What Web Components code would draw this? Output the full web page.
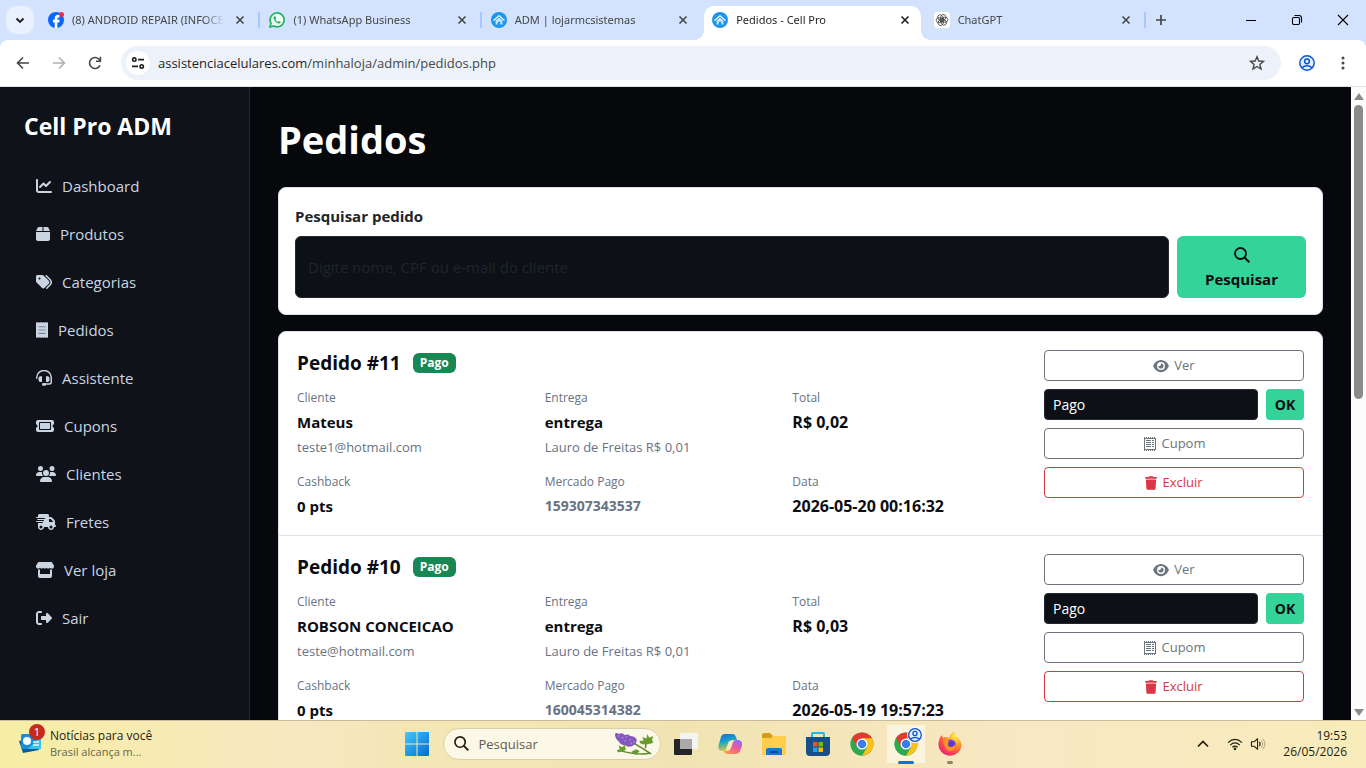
<!DOCTYPE html>
<html lang="pt-BR">
<head>
<meta charset="utf-8">
<title>Pedidos - Cell Pro</title>
<style>
  html, body {
    height: 100%;
    margin: 0;
  }

  body {
    display: flex;
    flex-direction: column;
    overflow: hidden;
    font-family: "Open Sans", "Noto Sans", sans-serif;
    font-size: 15px;
    line-height: 24px;
    background: #07080c;
  }
</style>
</head>
<body>

<tab-strip>
  <browser-tab icon="facebook">(8) ANDROID REPAIR (INFOCELL)</browser-tab>
  <browser-tab icon="whatsapp">(1) WhatsApp Business</browser-tab>
  <browser-tab icon="home" before-active>ADM | lojarmcsistemas</browser-tab>
  <browser-tab icon="home" active>Pedidos - Cell Pro</browser-tab>
  <browser-tab icon="chatgpt">ChatGPT</browser-tab>
</tab-strip>
<browser-toolbar host="assistenciacelulares.com" path="/minhaloja/admin/pedidos.php"></browser-toolbar>

<page-view>
  <admin-sidebar slot="sidebar" heading="Cell Pro ADM">
    <sidebar-link icon="chart">Dashboard</sidebar-link>
    <sidebar-link icon="box">Produtos</sidebar-link>
    <sidebar-link icon="tags">Categorias</sidebar-link>
    <sidebar-link icon="receipt">Pedidos</sidebar-link>
    <sidebar-link icon="headset">Assistente</sidebar-link>
    <sidebar-link icon="ticket">Cupons</sidebar-link>
    <sidebar-link icon="users">Clientes</sidebar-link>
    <sidebar-link icon="truck">Fretes</sidebar-link>
    <sidebar-link icon="store">Ver loja</sidebar-link>
    <sidebar-link icon="logout">Sair</sidebar-link>
  </admin-sidebar>

  <order-search></order-search>
  <order-list>
    <order-row number="11" status="Pago">
      <order-field label="Cliente" note="teste1@hotmail.com">Mateus</order-field>
      <order-field label="Entrega" note="Lauro de Freitas R$ 0,01">entrega</order-field>
      <order-field label="Total" numeric>R$ 0,02</order-field>
      <order-field label="Cashback">0 pts</order-field>
      <order-field label="Mercado Pago" muted>159307343537</order-field>
      <order-field label="Data" numeric>2026-05-20 00:16:32</order-field>
    </order-row>
    <order-row number="10" status="Pago">
      <order-field label="Cliente" note="teste@hotmail.com">ROBSON CONCEICAO</order-field>
      <order-field label="Entrega" note="Lauro de Freitas R$ 0,01">entrega</order-field>
      <order-field label="Total" numeric>R$ 0,03</order-field>
      <order-field label="Cashback">0 pts</order-field>
      <order-field label="Mercado Pago" muted>160045314382</order-field>
      <order-field label="Data" numeric>2026-05-19 19:57:23</order-field>
    </order-row>
  </order-list>
</page-view>

<task-bar></task-bar>

<script>
// [viewBox width, viewBox height, markup]
const chromeLogo = `
  <circle cx="24" cy="24" r="23" fill="#34a853"/>
  <path d="M24 24 4.100 12.500A23 23 0 0 1 43.900 12.500Z" fill="#e33b2e"/>
  <path d="M4.100 12.500 14.500 30 24 12.500Z" fill="#e33b2e"/>
  <path d="M43.900 12.500A23 23 0 0 1 24 47L34 29.500 24 12.500Z" fill="#fbc116"/>
  <path d="M4.100 12.500A23 23 0 0 0 24 47L34 29.500 24 34 14.500 29.500Z" fill="#2da94f"/>
  <circle cx="24" cy="24" r="11" fill="#fff"/>
  <circle cx="24" cy="24" r="8.500" fill="#3b7ded"/>`;

const ICONS = {
  chart: [512, 512, `<path d="M64 64c0-17.700-14.300-32-32-32S0 46.300 0 64V400c0 44.200 35.800 80 80 80H480c17.700 0 32-14.300 32-32s-14.300-32-32-32H80c-8.800 0-16-7.200-16-16V64zm406.600 86.600c12.500-12.500 12.500-32.800 0-45.300s-32.800-12.500-45.300 0L320 210.700l-57.400-57.400c-12.500-12.500-32.800-12.500-45.300 0l-112 112c-12.500 12.500-12.500 32.800 0 45.300s32.800 12.500 45.300 0L240 221.300l57.400 57.400c12.500 12.500 32.800 12.500 45.300 0l128-128z"/>`],
  box: [448, 512, `<path d="M50.700 58.500L0 160H208V32H93.700C75.500 32 58.900 42.300 50.700 58.500zM240 160H448L397.300 58.500C389.100 42.300 372.500 32 354.300 32H240V160zm208 32H0V416c0 35.300 28.700 64 64 64H384c35.300 0 64-28.700 64-64V192z"/>`],
  tags: [512, 512, `<path d="M345 39.100L472.800 168.400c52.400 53 52.400 138.200 0 191.200L360.800 472.900c-9.300 9.400-24.500 9.500-33.900 .2s-9.500-24.500-.2-33.900L438.600 325.900c33.900-34.300 33.900-89.400 0-123.700L310.900 72.900c-9.300-9.400-9.200-24.600 .2-33.900s24.600-9.200 33.900 .2zM0 229.500V80C0 53.500 21.500 32 48 32H197.500c17 0 33.300 6.700 45.300 18.700l168 168c25 25 25 65.500 0 90.500L277.300 442.700c-25 25-65.500 25-90.500 0l-168-168C6.700 262.700 0 246.500 0 229.500zM144 144a32 32 0 1 0 -64 0 32 32 0 1 0 64 0z"/>`],
  receipt: [384, 512, `<path d="M0 0l38 26L76 0l40 26L154 0l38 26L230 0l38 26L308 0l38 26L384 0V512l-38-26-38 26-40-26-38 26-38-26-38 26-38-26-40 26-38-26L0 512Z"/><path d="M90 150h204M90 256h204M90 362h204" stroke="#7c889c" stroke-width="36" stroke-linecap="round"/>`],
  headset: [512, 512, `<path d="M24 280v-44a232 220 0 0 1 464 0v150a60 60 0 0 1-60 60H300" fill="none" stroke="currentColor" stroke-width="46"/><path d="M144 200h48v180h-48a64 64 0 0 1-64-64v-52a64 64 0 0 1 64-64zM320 200h48a64 64 0 0 1 64 64v52a64 64 0 0 1-64 64h-48z"/><rect x="192" y="416" width="130" height="88" rx="44"/>`],
  ticket: [576, 512, `<path d="M64 64C28.700 64 0 92.700 0 128v64c0 8.800 7.400 15.700 15.700 18.600C34.500 217.100 48 235 48 256s-13.500 38.900-32.300 45.400C7.400 304.300 0 311.200 0 320v64c0 35.300 28.700 64 64 64H512c35.300 0 64-28.700 64-64V320c0-8.800-7.400-15.700-15.700-18.600C541.500 294.900 528 277 528 256s13.500-38.900 32.300-45.400c8.300-2.900 15.700-9.800 15.700-18.600V128c0-35.300-28.700-64-64-64H64zm64 112l0 160c0 8.800 7.200 16 16 16H432c8.800 0 16-7.200 16-16V176c0-8.800-7.200-16-16-16H144c-8.800 0-16 7.200-16 16zM96 160c0-17.700 14.300-32 32-32H448c17.700 0 32 14.300 32 32V352c0 17.700-14.300 32-32 32H128c-17.700 0-32-14.300-32-32V160z"/>`],
  users: [640, 512, `<path d="M144 0a80 80 0 1 1 0 160A80 80 0 1 1 144 0zM512 0a80 80 0 1 1 0 160A80 80 0 1 1 512 0zM0 298.700C0 239.800 47.800 192 106.700 192h42.700c15.900 0 31 3.500 44.600 9.700c-1.300 7.200-1.900 14.700-1.900 22.300c0 38.200 16.800 72.500 43.300 96H21.300C9.600 320 0 310.400 0 298.700zM405.300 320c26.600-23.500 42.600-57.800 42.600-96c0-7.600-.7-15-1.900-22.300c13.600-6.300 28.700-9.700 44.600-9.700h42.700C592.200 192 640 239.800 640 298.700c0 11.800-9.600 21.300-21.300 21.300H405.300zM224 224a96 96 0 1 1 192 0 96 96 0 1 1 -192 0zM128 485.300C128 411.700 187.700 352 261.300 352H378.700C452.300 352 512 411.700 512 485.300c0 14.700-11.900 26.700-26.700 26.700H154.700c-14.700 0-26.700-11.900-26.700-26.700z"/>`],
  truck: [640, 512, `<path d="M112 0C85.500 0 64 21.500 64 48V96H16c-8.800 0-16 7.200-16 16s7.200 16 16 16H272c8.800 0 16 7.200 16 16s-7.200 16-16 16H48c-8.800 0-16 7.200-16 16s7.200 16 16 16H240c8.800 0 16 7.200 16 16s-7.200 16-16 16H16c-8.800 0-16 7.200-16 16s7.200 16 16 16H208c8.800 0 16 7.200 16 16s-7.200 16-16 16H64V416c0 53 43 96 96 96s96-43 96-96H384c0 53 43 96 96 96s96-43 96-96h32c17.700 0 32-14.300 32-32s-14.300-32-32-32V237.300c0-17-6.700-33.300-18.700-45.300L512 114.700c-12-12-28.300-18.700-45.300-18.700H416V48c0-26.500-21.500-48-48-48H112zM544 237.300V256H416V160h50.700L544 237.300zM160 368a48 48 0 1 1 0 96 48 48 0 1 1 0-96zm272 48a48 48 0 1 1 96 0 48 48 0 1 1 -96 0z"/>`],
  store: [576, 512, `<path d="M90 0H486q18 0 28 16l54 86c24 40 0 106-56 106q-38 0-62-28-25 28-54 28-32 0-54-28-24 28-54 28-32 0-54-28-24 28-54 28-30 0-54-28-24 28-62 28C8 208-16 142 8 102L62 16Q72 0 90 0Z"/><path d="M64 236q36 10 64-2V384H448V234q28 12 64 2V448a64 64 0 0 1-64 64H128a64 64 0 0 1-64-64Z"/>`],
  logout: [512, 512, `<path d="M377.900 105.900L500.700 228.700c7.200 7.200 11.300 17.100 11.300 27.300s-4.100 20.100-11.300 27.300L377.900 406.100c-6.400 6.400-15 9.900-24 9.900c-18.700 0-33.900-15.200-33.900-33.900l0-62.100-128 0c-17.700 0-32-14.300-32-32l0-64c0-17.700 14.300-32 32-32l128 0 0-62.100c0-18.700 15.200-33.900 33.900-33.900c9 0 17.600 3.600 24 9.900zM160 96L96 96c-17.700 0-32 14.300-32 32l0 256c0 17.700 14.300 32 32 32l64 0c17.700 0 32 14.300 32 32s-14.300 32-32 32l-64 0c-53 0-96-43-96-96L0 128C0 75 43 32 96 32l64 0c17.700 0 32 14.300 32 32s-14.300 32-32 32z"/>`],
  eye: [576, 512, `<path d="M288 32c-80.800 0-145.500 36.800-192.600 80.600C48.600 156 17.300 208 2.500 243.700c-3.300 7.900-3.300 16.700 0 24.600C17.300 304 48.600 356 95.400 399.400C142.500 443.200 207.200 480 288 480s145.500-36.800 192.600-80.600c46.800-43.500 78.100-95.400 93-131.100c3.300-7.900 3.300-16.700 0-24.600c-14.900-35.700-46.200-87.700-93-131.100C433.500 68.800 368.800 32 288 32zM144 256a144 144 0 1 1 288 0 144 144 0 1 1 -288 0zm144-64c0 35.300-28.700 64-64 64c-7.100 0-13.900-1.200-20.300-3.300c-5.500-1.800-11.900 1.600-11.700 7.400c.3 6.900 1.300 13.800 3.200 20.700c13.700 51.200 66.400 81.600 117.600 67.900s81.600-66.400 67.900-117.600c-11.100-41.500-47.800-69.400-88.600-71.100c-5.800-.2-9.200 6.100-7.400 11.700c2.100 6.400 3.300 13.200 3.300 20.300z"/>`],
  coupon: [14, 14, `<rect x="1.500" y="1.500" width="11" height="11" fill="none" stroke="currentColor"/><path d="M1 .5h12M1 13.500h12" stroke="currentColor" stroke-dasharray="1 1"/><path d="M3 3.500h5M3 5.500h5M3 7.500h5M3 9.500h5M9 3.500h2M9 5.500h2M9 7.500h2M9 9.500h2" stroke="currentColor"/>`],
  trash: [448, 512, `<path d="M135.200 17.700L128 32H32C14.300 32 0 46.300 0 64S14.300 96 32 96H416c17.700 0 32-14.300 32-32s-14.300-32-32-32H320l-7.200-14.300C307.400 6.800 296.300 0 284.200 0H163.800c-12.100 0-23.200 6.800-28.600 17.700zM416 128H32L53.200 467c1.600 25.300 22.600 45 47.900 45H346.900c25.300 0 46.300-19.700 47.900-45L416 128z"/>`],
  search: [16, 16, `<circle cx="6.500" cy="6.500" r="5.500" fill="none" stroke="currentColor" stroke-width="1.800"/><path d="M10.500 10.500 15.300 15.300" stroke="currentColor" stroke-width="2"/>`],

  facebook: [16, 16, `<circle cx="8" cy="8" r="8" fill="#0866ff"/><path d="M6.700 16v-5.600H4.900V7.700h1.800V6.600c0-2.600 1.300-3.800 3.500-3.800.6 0 1 .1 1.400.2v2.400h-.9c-1 0-1.300.5-1.300 1.400v.9h2.200l-.4 2.700H9.400V16Z" fill="#fff"/><circle cx="13.500" cy="2.500" r="2.500" fill="#f5284b"/>`],
  whatsapp: [16, 16, `<path d="M1 15l1-3.700A7 7 0 1 1 4.700 14Z" fill="#f0fff5" stroke="#25b064" stroke-width="1.700"/><path d="M5.600 4.300c-.8.300-1.200 1.100-1 2 .5 2.500 2.800 4.900 5.200 5.300 1 .1 1.900-.5 2-1.500l-1.900-1-1 .9c-1.100-.5-2-1.400-2.400-2.400l.7-.8-.7-2.200Z" fill="#25b064"/>`],
  home: [16, 16, `<circle cx="8" cy="8" r="8" fill="#1b95ee"/><path d="M2.900 8.300 8 3.600l5.100 4.700" fill="none" stroke="#fff" stroke-width="1.200" stroke-linecap="round" stroke-linejoin="round"/><path d="M4.600 8.600 8 5.600l3.400 3v3.900H9.300V9.800H6.700v2.700H4.600Z" fill="#c5e5ff"/>`],
  chatgpt: [16, 16, `<rect width="16" height="16" rx="3" fill="#fff"/><g fill="none" stroke="#444" stroke-width=".8"><ellipse cx="8" cy="5.600" rx="2.600" ry="3.500" transform="rotate(25 8 8)"/><ellipse cx="8" cy="5.600" rx="2.600" ry="3.500" transform="rotate(85 8 8)"/><ellipse cx="8" cy="5.600" rx="2.600" ry="3.500" transform="rotate(145 8 8)"/><ellipse cx="8" cy="5.600" rx="2.600" ry="3.500" transform="rotate(205 8 8)"/><ellipse cx="8" cy="5.600" rx="2.600" ry="3.500" transform="rotate(265 8 8)"/><ellipse cx="8" cy="5.600" rx="2.600" ry="3.500" transform="rotate(325 8 8)"/></g>`],

  close: [16, 16, `<path d="M4.500 4.500l7 7M11.500 4.500l-7 7" stroke="currentColor" stroke-width="1.600"/>`],
  plus: [16, 16, `<path d="M8 3v10M3 8h10" stroke="currentColor" stroke-width="1.700"/>`],
  down: [16, 16, `<path d="M4.500 6.500 8 10l3.500-3.500" fill="none" stroke="currentColor" stroke-width="1.900"/>`],
  up: [16, 16, `<path d="M3 10.500 8 5.500l5 5" fill="none" stroke="currentColor" stroke-width="1.700"/>`],
  minimize: [16, 16, `<path d="M3 8.500h10" stroke="currentColor"/>`],
  restore: [16, 16, `<rect x="3.500" y="5.500" width="7" height="7" rx="1.200" fill="none" stroke="currentColor" stroke-width="1.100"/><path d="M5.500 3.500H10a2.500 2.500 0 0 1 2.500 2.500v4.500" fill="none" stroke="currentColor" stroke-width="1.100"/>`],
  exit: [16, 16, `<path d="M3 3l10 10M13 3 3 13" stroke="currentColor" stroke-width="1.100"/>`],
  back: [16, 16, `<path d="M14 8H3M8 2.500 2.500 8 8 13.500" fill="none" stroke="currentColor" stroke-width="1.600"/>`],
  forward: [16, 16, `<path d="M2 8h11M8 2.500 13.500 8 8 13.500" fill="none" stroke="currentColor" stroke-width="1.600"/>`],
  reload: [16, 16, `<path d="M13 10.300A5.500 5.500 0 1 1 12 4.200L13.500 5.700" fill="none" stroke="currentColor" stroke-width="1.600"/><path d="M13.400 1.800v4.400H9" fill="none" stroke="currentColor" stroke-width="1.600"/>`],
  tune: [16, 16, `<g fill="none" stroke="currentColor" stroke-width="1.600"><circle cx="4.300" cy="4.600" r="1.700"/><path d="M8 4.600h6M2 11.400h6"/><circle cx="11.700" cy="11.400" r="1.700"/></g>`],
  star: [16, 16, `<path d="M8 1.800 9.800 6l4.700.4-3.600 3 1.100 4.600L8 11.500 4 14l1.100-4.600-3.600-3L6.200 6Z" fill="none" stroke="currentColor" stroke-width="1.400"/>`],
  person: [16, 16, `<circle cx="8" cy="8" r="7.200" fill="#e4efff" stroke="#0b57d0" stroke-width="1.500"/><circle cx="8" cy="6.300" r="2.400" fill="none" stroke="#0b57d0" stroke-width="1.500"/><path d="M3 12.700c2.800-2.500 7.200-2.500 10 0" fill="none" stroke="#0b57d0" stroke-width="1.500"/>`],
  dots: [16, 16, `<circle cx="8" cy="3" r="1.500"/><circle cx="8" cy="8" r="1.500"/><circle cx="8" cy="13" r="1.500"/>`],

  news: [24, 24, `<path d="M1 11l17-4 3 13-16 3Z" fill="#0a5a9c"/><rect x="3" y="4" width="20" height="15" rx="1.500" fill="#1690dc"/><path d="M10 19 23 6v11.500a1.500 1.500 0 0 1-1.500 1.500Z" fill="#35c5e8"/><circle cx="9" cy="11" r="4" fill="#fff"/><path d="M15 12h6M15 15h6" stroke="#d8f6ff" stroke-width="1.500"/>`],
  windows: [24, 24, `<linearGradient id="w" x2="1" y2="1"><stop stop-color="#43c9ff"/><stop offset="1" stop-color="#0069cf"/></linearGradient><path d="M0 1q0-1 1-1h10.500v11.500H0ZM12.500 0H23q1 0 1 1v10.500H12.500ZM0 12.500h11.500V24H1q-1 0-1-1ZM12.500 12.500H24V23q0 1-1 1H12.500Z" fill="url(#w)"/>`],
  taskview: [24, 24, `<rect y="7" width="18" height="16" rx="1" fill="#252525"/><rect x="6" y="1" width="18" height="16" rx="1" fill="#f4f4f4"/><path d="M6 7h12v10H6Z" fill="#aaa"/>`],
  copilot: [24, 24, `<linearGradient id="a" x2=".3" y2="1"><stop stop-color="#1466df"/><stop offset=".5" stop-color="#17a6c6"/><stop offset="1" stop-color="#e3c33d"/></linearGradient><linearGradient id="b" x1=".8" x2=".2" y2="1"><stop stop-color="#9368ff"/><stop offset=".5" stop-color="#f05a98"/><stop offset="1" stop-color="#ff9547"/></linearGradient><path d="M7 2h8q2 0 3 3l1 3h-5q-2 0-3 3l-2 6q-1 2-3 2H4q-5-1-3-7l2-7q1-3 4-3Z" fill="url(#a)"/><path d="M17 22H9q-2 0-3-3h4q2 0 3-3l2-6q1-2 3-2h3q4 1 3 6l-2 5q-1 3-5 3Z" fill="url(#b)"/><path d="M11 9h4l-3 8H8Z" fill="#f7e9bf"/>`],
  folder: [24, 24, `<path d="M0 3q0-2 2-2h6l3 3h11q2 0 2 2v6H0Z" fill="#d99a15"/><path d="M0 6h9l2-2h11q2 0 2 2v17H0Z" fill="#ffce4a"/><path d="M4 23v-5q0-2 2-2h12q2 0 2 2v5Z" fill="#1479ce"/><path d="M8 20h8" stroke="#084d91" stroke-width="2"/>`],
  shop: [24, 24, `<path d="M6 6V2q0-1 1-1h10q1 0 1 1v4" fill="none" stroke="#26b4ec" stroke-width="2"/><path d="M0 5h24v15q0 4-4 4H4q-4 0-4-4Z" fill="#174f88"/><path d="M7 10h4.500v4.500H7Z" fill="#f05025"/><path d="M12.500 10H17v4.500h-4.500Z" fill="#7fba00"/><path d="M7 15.500h4.500V20H7Z" fill="#15a6ef"/><path d="M12.500 15.500H17V20h-4.500Z" fill="#ffb900"/>`],
  chrome: [48, 48, chromeLogo],
  firefox: [24, 24, `<radialGradient id="f" cx=".75" cy=".15" r="1"><stop stop-color="#fff24a"/><stop offset=".4" stop-color="#ff9a26"/><stop offset=".75" stop-color="#ff3d50"/><stop offset="1" stop-color="#d9188c"/></radialGradient><path d="M15 0q3 2 4 5 4 3 4.500 8A11.500 11.500 0 1 1 1 9q0-3 3-6l1 3q3-2 6 0 1-4 4-6Z" fill="url(#f)"/><circle cx="12.500" cy="13" r="5.500" fill="#7146df"/><path d="M5 8q4-1 6 1l3 1q-1 2-3 2 0 2 3 2 3 0 4-2 0 7-6 7-6-1-7-11Z" fill="#ff902b"/><circle cx="13" cy="12" r="3" fill="#5b3bc4"/>`],
  lavender: [42, 24, `<g fill="none" stroke="#5c8a27" stroke-width="1.600"><path d="M20 11q10 6 19 12M38 22Q28 25 8 20M33 17 34 8"/></g><path d="M1 2q2-2 4 0 4-2 6 1 4-1 6 1 5 0 7 4l-1 4-4 3q-4 1-7-1-5 0-7-4Q1 7 1 2Z" fill="#8357bd"/><g fill="#ab86da"><circle cx="5" cy="4" r="1"/><circle cx="9" cy="6" r="1"/><circle cx="13" cy="5" r="1"/><circle cx="12" cy="9" r="1"/><circle cx="17" cy="8" r="1"/><circle cx="18" cy="12" r="1"/><circle cx="21" cy="10" r="1"/></g><path d="M33 13q-7 0-6-4l4 0-1-4 4 2 1-5 2 4 4-2-1 5q3 2-1 3ZM9 20q-5 3-6-1l3-1-1-4 4 2 2-3 1 4q2 2-3 3ZM18 21l5-3 4 2-4 4Z" fill="#679b2c"/>`],
  wifi: [18, 16, `<g fill="none" stroke="currentColor" stroke-width="1.300"><path d="M1 6.500Q9-1 17 6.500M3.500 9.200q5.500-5 11 0M6 11.700q3-2.700 6 0"/></g><circle cx="9" cy="13.500" r="1.500"/>`],
  speaker: [18, 16, `<path d="M1.500 5.500h3L8.500 2v12l-4-3.500h-3Z" fill="none" stroke="currentColor" stroke-width="1.200" stroke-linejoin="round"/><path d="M10.500 5.500q2 2.500 0 5" fill="none" stroke="currentColor" stroke-width="1.200"/><path d="M12.500 3.500q4 4.500 0 9M14.500 2q5 6 0 12" fill="none" stroke="#aaa07c" stroke-width="1.100"/>`],
};

class BaseElement extends HTMLElement {
  constructor() {
    super();
    this.attachShadow({ mode: "open" });
  }

  connectedCallback() {
    this.shadowRoot.innerHTML = `
      <style>
        *, *::before, *::after { box-sizing: border-box; }
        :host { display: block; box-sizing: border-box; }
        button, input, select { font: inherit; color: inherit; margin: 0; padding: 0; border: 0; background: none; }
        button { display: flex; align-items: center; justify-content: center; }
        ${this.styles()}
      </style>
      ${this.render()}
    `;
  }

  styles() { return ""; }
  render() { return "<slot></slot>"; }
}

// <ui-icon name="box" size="16"> -- size is the drawn height
class UiIcon extends BaseElement {
  styles() {
    return `
      :host { display: inline-flex; flex: none; }
      svg { display: block; fill: currentColor; }
    `;
  }

  render() {
    const [w, h, markup] = ICONS[this.getAttribute("name")];
    const size = Number(this.getAttribute("size") || 16);
    return `<svg viewBox="0 0 ${w} ${h}" width="${Math.round(size * w / h)}" height="${size}" aria-hidden="true">${markup}</svg>`;
  }
}

class TabStrip extends BaseElement {
  styles() {
    return `
      :host { display: flex; flex: none; height: 40px; padding-left: 6px; background: #d3e3fd; color: #1f1f1f; }
      .list { width: 28px; height: 28px; margin: 6px 6px 0 0; border-radius: 10px; background: #e9f1fe; }
      .tabs { display: flex; flex: 1; min-width: 0; padding-top: 6px; }
      .add { width: 28px; color: #444746; }
      .window { display: flex; margin-left: 53px; color: #000; }
      .window button { width: 46px; }
    `;
  }

  render() {
    return `
      <button class="list" aria-label="Pesquisar guias"><ui-icon name="down"></ui-icon></button>
      <div class="tabs"><slot></slot></div>
      <button class="add" aria-label="Nova guia"><ui-icon name="plus"></ui-icon></button>
      <div class="window">
        <button aria-label="Minimizar"><ui-icon name="minimize"></ui-icon></button>
        <button aria-label="Restaurar"><ui-icon name="restore"></ui-icon></button>
        <button aria-label="Fechar"><ui-icon name="exit"></ui-icon></button>
      </div>
    `;
  }
}

class BrowserTab extends BaseElement {
  styles() {
    return `
      :host {
        display: flex; flex: 1; min-width: 0; align-items: center; gap: 8px;
        position: relative; padding: 0 13px 6px 8px;
        font-family: "Noto Sans", sans-serif; font-size: 11px; line-height: 16px; color: #444746;
      }
      :host([active]) { background: #fff; border-radius: 10px 10px 0 0; color: #1f1f1f; margin-right: 5px; padding-right: 8px; }
      :host(:not([active]):not([before-active]))::after {
        content: ""; position: absolute; right: 1px; top: 6px;
        width: 2px; height: 16px; background: #a8c7fa;
      }
      :host([active])::before, :host([active])::after {
        content: ""; position: absolute; bottom: 0; width: 10px; height: 10px;
      }
      :host([active])::before { right: 100%; background: radial-gradient(circle at 0 0, transparent 10px, #fff 10px); }
      :host([active])::after { left: 100%; background: radial-gradient(circle at 100% 0, transparent 10px, #fff 10px); }
      .title {
        flex: 1; overflow: hidden; white-space: nowrap;
        mask-image: linear-gradient(to left, transparent, #000 20px);
      }
    `;
  }

  render() {
    return `
      <ui-icon name="${this.getAttribute("icon")}"></ui-icon>
      <span class="title"><slot></slot></span>
      <button aria-label="Fechar guia"><ui-icon name="close"></ui-icon></button>
    `;
  }
}

class BrowserToolbar extends BaseElement {
  styles() {
    return `
      :host { flex: none; background: #d3e3fd; color: #444746; }
      .bar {
        display: flex; align-items: center; height: 47px; padding: 0 5px;
        background: #fff; border-bottom: 1px solid #dfe0e3; border-radius: 8px 8px 0 0;
      }
      .bar > button { width: 36px; height: 36px; }
      .off { color: #b0b2b3; }
      .address {
        display: flex; flex: 1; align-items: center; height: 34px; margin: 0 8px; padding: 0 16px 0 5px;
        border-radius: 17px; background: #edf1fa; font-size: 13px; line-height: 20px;
      }
      .site { width: 24px; height: 24px; margin-right: 8px; border-radius: 50%; background: #fff; color: #1f1f1f; }
      .url { flex: 1; }
      .url b { font-weight: 400; color: #1f1f1f; }
    `;
  }

  render() {
    return `
      <div class="bar">
        <button aria-label="Voltar"><ui-icon name="back"></ui-icon></button>
        <button class="off" aria-label="Avançar"><ui-icon name="forward"></ui-icon></button>
        <button aria-label="Recarregar"><ui-icon name="reload"></ui-icon></button>
        <div class="address">
          <button class="site" aria-label="Informações do site"><ui-icon name="tune"></ui-icon></button>
          <span class="url" role="textbox" aria-label="Endereço"><b>${this.getAttribute("host")}</b>${this.getAttribute("path")}</span>
          <button aria-label="Favoritar"><ui-icon name="star"></ui-icon></button>
        </div>
        <button aria-label="Perfil"><ui-icon name="person"></ui-icon></button>
        <button aria-label="Menu"><ui-icon name="dots"></ui-icon></button>
      </div>
    `;
  }
}

class PageView extends BaseElement {
  styles() {
    return `
      :host { display: flex; flex: 1; min-height: 0; color: #0b0d12; }
      main { flex: 1; min-width: 0; padding: 28px; overflow: hidden; }
      h1 { margin: 0 0 24px; color: #fff; font-size: 38px; line-height: 48px; font-weight: 700; }
      .scroll {
        display: flex; flex-direction: column; flex: none; align-items: center; justify-content: space-between;
        width: 15px; padding: 6px 0 4px; background: #fcfcfc;
      }
      .arrow { border: 5px solid transparent; border-top: 0; border-bottom: 7px solid #8b8b8b; }
      .arrow.down { transform: rotate(180deg); }
      .track { flex: 1; padding: 5px 0; }
      .thumb { width: 9px; height: 49%; border-radius: 5px; background: #8b8b8b; }
    `;
  }

  render() {
    return `
      <slot name="sidebar"></slot>
      <main>
        <h1>Pedidos</h1>
        <slot></slot>
      </main>
      <div class="scroll" aria-hidden="true">
        <span class="arrow"></span>
        <div class="track"><div class="thumb"></div></div>
        <span class="arrow down"></span>
      </div>
    `;
  }
}

class AdminSidebar extends BaseElement {
  styles() {
    return `
      :host { flex: none; width: 250px; padding: 24px; background: #0f1218; border-right: 1px solid #24272d; }
      h2 { margin: 0 0 21px; color: #fff; font-size: 23px; line-height: 30px; font-weight: 700; }
    `;
  }

  render() {
    return `<h2>${this.getAttribute("heading")}</h2><nav><slot></slot></nav>`;
  }
}

class SidebarLink extends BaseElement {
  styles() {
    return `
      a { display: flex; align-items: center; gap: 10px; height: 48px; padding: 0 12px; color: #cbd5e1; text-decoration: none; }
    `;
  }

  render() {
    return `<a href="#"><ui-icon name="${this.getAttribute("icon")}"></ui-icon><slot></slot></a>`;
  }
}

class OrderSearch extends BaseElement {
  styles() {
    return `
      :host { margin-bottom: 16px; padding: 16px; background: #fff; border: 1px solid #dee2e6; border-radius: 8px; }
      label { display: block; margin-bottom: 8px; color: #212529; font-weight: 700; }
      form { display: flex; gap: 8px; margin: 0; }
      input { flex: 1; min-width: 0; padding: 0 12px; background: #0d1017; border: 1px solid #24272d; border-radius: 6px; color: #fff; }
      input::placeholder { color: #212529; opacity: 1; }
      button { flex-direction: column; gap: 4px; width: 129px; height: 62px; padding-top: 4px; border-radius: 6px; background: #34d399; color: #0b0d12; font-weight: 700; }
    `;
  }

  render() {
    return `
      <label for="q">Pesquisar pedido</label>
      <form onsubmit="return false">
        <input id="q" type="text" placeholder="Digite nome, CPF ou e-mail do cliente">
        <button type="submit"><ui-icon name="search"></ui-icon>Pesquisar</button>
      </form>
    `;
  }
}

class OrderList extends BaseElement {
  styles() {
    return `:host { background: #fff; border: 1px solid #dee2e6; border-radius: 8px; }`;
  }
}

class OrderRow extends BaseElement {
  styles() {
    return `
      :host { display: flex; gap: 16px; padding: 18px 18px 17px; border-bottom: 1px solid #dee2e6; }
      .info { flex: 1; min-width: 0; }
      header { display: flex; align-items: center; gap: 12px; height: 26px; margin-bottom: 12px; }
      h3 { margin: 0; font-size: 19px; line-height: 26px; font-weight: 700; }
      .badge { padding: 2px 7px; border-radius: 6px; background: #198754; color: #fff; font-size: 12px; line-height: 16px; font-weight: 700; }
      .fields { display: grid; grid-template-columns: repeat(3, 1fr); gap: 14px 12px; }
      .actions { display: flex; flex-direction: column; gap: 8px; width: 260px; font-size: 13px; line-height: 21px; }
      .actions button { gap: 5px; height: 31px; border: 1px solid #6c757d; border-radius: 4px; color: #6c757d; }
      .actions button.danger { border-color: #dc3545; color: #dc3545; }
      form { display: flex; gap: 8px; margin: 0; font-size: 14px; }
      select { flex: 1; appearance: none; height: 31px; padding: 0 8px; background: #0d1017; border: 1px solid #24272d; border-radius: 4px; color: #fff; }
      .actions button.ok { width: 38px; border: 0; background: #34d399; color: #0b0d12; font-weight: 700; }
    `;
  }

  render() {
    const status = this.getAttribute("status");
    return `
      <div class="info">
        <header>
          <h3>Pedido #${this.getAttribute("number")}</h3>
          <span class="badge">${status}</span>
        </header>
        <div class="fields"><slot></slot></div>
      </div>
      <div class="actions">
        <button><ui-icon name="eye" size="14"></ui-icon>Ver</button>
        <form onsubmit="return false">
          <select aria-label="Status"><option>${status}</option></select>
          <button class="ok">OK</button>
        </form>
        <button><ui-icon name="coupon" size="14"></ui-icon>Cupom</button>
        <button class="danger"><ui-icon name="trash" size="14"></ui-icon>Excluir</button>
      </div>
    `;
  }
}

class OrderField extends BaseElement {
  styles() {
    return `
      :host { display: flex; flex-direction: column; gap: 3px; }
      .label { color: #687284; font-size: 12px; line-height: 19px; }
      .value { font-weight: 700; }
      :host([numeric]) .value { font-size: 16px; }
      :host([muted]) .value { color: #687284; font-size: 14px; }
      .note { color: #687284; font-size: 13px; line-height: 21px; }
    `;
  }

  render() {
    const note = this.getAttribute("note");
    return `
      <span class="label">${this.getAttribute("label")}</span>
      <span class="value"><slot></slot></span>
      ${note ? `<span class="note">${note}</span>` : ""}
    `;
  }
}

class TaskBar extends BaseElement {
  styles() {
    return `
      :host {
        display: grid; grid-template-columns: 1fr auto 1fr; align-items: center; flex: none;
        height: 48px; padding-bottom: 2px; border-top: 1px solid #c8bd9a; color: #1f1c10; font-size: 12px; line-height: 16px;
        background: linear-gradient(90deg, #f7eea5, #f7e8c2 22%, #f5e6b6 30%, #f1e4b2 50%, #f8e8c4 75%, #f8ecba);
      }
      .news { justify-self: start; gap: 8px; margin-left: 18px; text-align: left; }
      .news .pic { position: relative; }
      .news small { display: block; font-size: 11px; color: #6b6547; }
      .badge {
        position: absolute; top: -6px; right: -3px; width: 16px; height: 16px;
        border-radius: 50%; background: #c42b1c; color: #fff; font-size: 11px; text-align: center;
      }
      .apps { display: flex; align-items: center; }
      .apps > button { position: relative; width: 44px; height: 44px; }
      .find {
        display: flex; align-items: center; gap: 10px; width: 218px; height: 32px; margin: 0 3px 0 4px; padding: 0 6px 0 10px;
        border: 1px solid #d9cfa6; border-radius: 16px; background: #fcf8e8; font-size: 13px;
      }
      .find input { flex: 1; min-width: 0; }
      .find input::placeholder { color: #5f5b4c; opacity: 1; }
      .apps > .current { background: #fbf4dc; background-clip: content-box; padding: 3px; }
      .current .user { position: absolute; right: 5px; top: 5px; border: 1px solid #fff; border-radius: 50%; }
      .current::after, .open::after {
        content: ""; position: absolute; bottom: 2px; left: 14px; width: 16px; height: 3px; border-radius: 2px; background: #0078d4;
      }
      .open::after { left: 19px; width: 6px; background: #8c846a; }
      .tray { display: flex; align-items: center; justify-self: end; margin-right: 19px; }
      .tray .up { margin-right: 16px; }
      .tray .net { gap: 7px; margin-right: 17px; }
      .clock { display: block; text-align: right; }
      time { display: block; }
    `;
  }

  render() {
    return `
      <button class="news">
        <span class="pic"><ui-icon name="news" size="24"></ui-icon><span class="badge">1</span></span>
        <span>Notícias para você<small>Brasil alcança m...</small></span>
      </button>
      <div class="apps">
        <button aria-label="Iniciar"><ui-icon name="windows" size="24"></ui-icon></button>
        <label class="find">
          <ui-icon name="search" size="15"></ui-icon>
          <input type="text" placeholder="Pesquisar" aria-label="Pesquisar">
          <ui-icon name="lavender" size="23"></ui-icon>
        </label>
        <button aria-label="Visão de tarefas"><ui-icon name="taskview" size="24"></ui-icon></button>
        <button aria-label="Copilot"><ui-icon name="copilot" size="24"></ui-icon></button>
        <button aria-label="Explorador de arquivos"><ui-icon name="folder" size="24"></ui-icon></button>
        <button aria-label="Microsoft Store"><ui-icon name="shop" size="24"></ui-icon></button>
        <button aria-label="Google Chrome"><ui-icon name="chrome" size="24"></ui-icon></button>
        <button class="current" aria-label="Google Chrome, Cell Pro"><ui-icon name="chrome" size="24"></ui-icon><ui-icon class="user" name="person" size="14"></ui-icon></button>
        <button class="open" aria-label="Firefox"><ui-icon name="firefox" size="24"></ui-icon></button>
      </div>
      <div class="tray">
        <button class="up" aria-label="Mostrar ícones ocultos"><ui-icon name="up" size="16"></ui-icon></button>
        <button class="net" aria-label="Rede e volume"><ui-icon name="wifi" size="14"></ui-icon><ui-icon name="speaker" size="14"></ui-icon></button>
        <button class="clock"><time>19:53</time><time>26/05/2026</time></button>
      </div>
    `;
  }
}

customElements.define("ui-icon", UiIcon);
customElements.define("tab-strip", TabStrip);
customElements.define("browser-tab", BrowserTab);
customElements.define("browser-toolbar", BrowserToolbar);
customElements.define("page-view", PageView);
customElements.define("admin-sidebar", AdminSidebar);
customElements.define("sidebar-link", SidebarLink);
customElements.define("order-search", OrderSearch);
customElements.define("order-list", OrderList);
customElements.define("order-row", OrderRow);
customElements.define("order-field", OrderField);
customElements.define("task-bar", TaskBar);
</script>
</body>
</html>
